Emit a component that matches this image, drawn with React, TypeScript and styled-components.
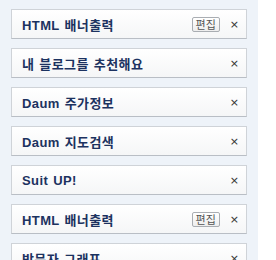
import * as React from 'react';
import styled, {createGlobalStyle} from 'styled-components';

const GlobalStyle = createGlobalStyle`
  html, body {
    margin: 0;
    padding: 0;
    background: #ffffff;
    overflow: hidden;
  }
`;

const Panel = styled.div`
  width: 236px;
  height: 260px;
  padding: 0 11px;
  background: #eef3f9;
  overflow: hidden;
`;

const WidgetList = styled.ul`
  list-style: none;
  margin: -30px 0 0;
  padding: 0;
  display: flex;
  flex-direction: column;
  gap: 9px;
`;

const Widget = styled.li`
  box-sizing: border-box;
  height: 30px;
  display: flex;
  align-items: center;
  padding: 0 7px 0 10px;
  border: 1px solid #cfd3d8;
  border-bottom-color: #b9bec5;
  background: linear-gradient(#ffffff, #f5f6f7);
`;

const Title = styled.span`
  flex: 1 1 auto;
  font-family: 'Liberation Sans', 'Noto Sans CJK KR', sans-serif;
  font-size: 13px;
  font-weight: bold;
  letter-spacing: 0.4px;
  word-spacing: 1px;
  color: #1c3260;
  white-space: nowrap;
`;

const EditButton = styled.button`
  flex: 0 0 auto;
  height: 15px;
  padding: 0 3px;
  margin-right: 10px;
  border: 1px solid #a9adb2;
  border-radius: 2px;
  background: linear-gradient(#ffffff, #eeeeee);
  font-family: 'Noto Sans CJK KR', sans-serif;
  font-size: 11px;
  line-height: 13px;
  color: #555;
`;

const Close = styled.span`
  flex: 0 0 auto;
  font-family: 'DejaVu Sans', sans-serif;
  font-size: 11px;
  color: #333;
`;

const widgets = [
  {title: '카테고리', edit: false},
  {title: 'HTML 배너출력', edit: true},
  {title: '내 블로그를 추천해요', edit: false},
  {title: 'Daum 주가정보', edit: false},
  {title: 'Daum 지도검색', edit: false},
  {title: 'Suit UP!', edit: false},
  {title: 'HTML 배너출력', edit: true},
  {title: '방문자 그래프', edit: false},
];

const App: React.FC = () => {
  return (
    <Panel>
      <GlobalStyle />
      <WidgetList>
        {widgets.map((w, index) => (
          <Widget key={index}>
            <Title>{w.title}</Title>
            {w.edit && <EditButton>편집</EditButton>}
            <Close>×</Close>
          </Widget>
        ))}
      </WidgetList>
    </Panel>
  );
};

export default App;
